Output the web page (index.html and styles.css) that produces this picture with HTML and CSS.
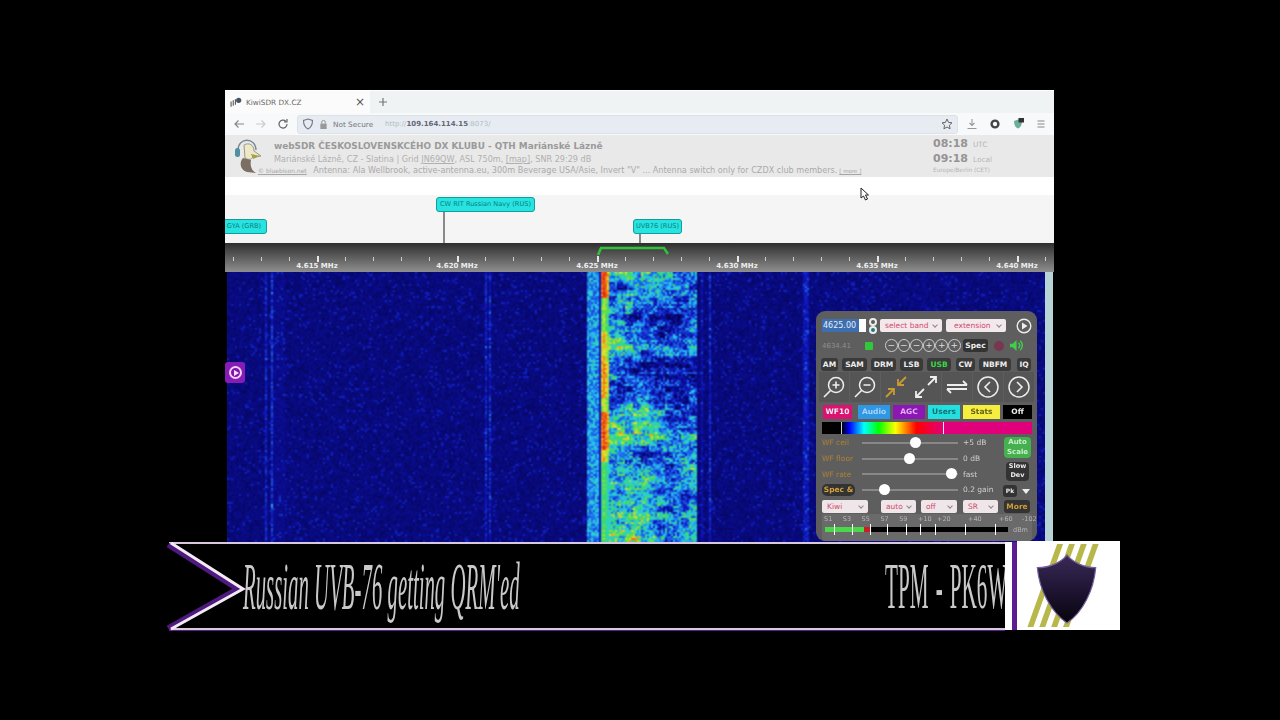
FILE: index.html
```html
<!DOCTYPE html>
<html lang="en">
<head>
<meta charset="utf-8">
<title>Russian UVB-76 getting QRM'ed</title>
<link rel="stylesheet" href="styles.css">
</head>
<body>
<main class="stage">
  <section class="window">
    <div class="tabbar">
      <div class="tab">
        <svg class="favicon" viewBox="0 0 12 10"><path d="M1 9V4M3 8V3M5 7V2" stroke="#555" fill="none"/><circle cx="8" cy="3" r="2.4" fill="#456"/></svg>
        <span class="tab-title">KiwiSDR DX.CZ</span>
        <span class="tab-close">×</span>
      </div>
      <svg class="tab-new" viewBox="0 0 8 8"><path d="M4 0v8M0 4h8" stroke="#777" stroke-width="1.200"/></svg>
    </div>
    <div class="toolbar">
      <svg class="tool" viewBox="0 0 12 12"><path d="M11 6H2M5.500 2.500 2 6l3.500 3.500" fill="none" stroke="#888" stroke-width="1.200"/></svg>
      <svg class="tool" viewBox="0 0 12 12"><path d="M1 6h9M6.500 2.500 10 6 6.500 9.500" fill="none" stroke="#ccc" stroke-width="1.200"/></svg>
      <svg class="tool" viewBox="0 0 12 12"><path d="M10 6a4 4 0 1 1-1.200-2.800M10 1v3H7" fill="none" stroke="#666" stroke-width="1.200"/></svg>
      <div class="urlbar">
        <svg class="shield-small" viewBox="0 0 12 12"><path d="M6 1 10.500 2.500C10.500 7 9 9.500 6 11 3 9.500 1.500 7 1.500 2.500Z" fill="none" stroke="#778" stroke-width="1.100"/></svg>
        <svg class="lock" viewBox="0 0 10 12"><path d="M3 5V3.500a2 2 0 0 1 4 0V5" fill="none" stroke="#888"/><rect x="1.500" y="5" width="7" height="6" fill="#999"/></svg>
        <span class="not-secure">Not Secure</span>
        <span class="url"><span class="dim">http://</span><b>109.164.114.15</b><span class="dim">:8073/</span></span>
        <svg class="star" viewBox="0 0 12 12"><path d="M6 1 7.500 4.400 11 4.800 8.400 7.200 9.100 10.800 6 9 2.900 10.800 3.600 7.200 1 4.800 4.500 4.400Z" fill="none" stroke="#666"/></svg>
      </div>
      <div class="tool-right">
        <svg class="tool" viewBox="0 0 12 12"><path d="M6 1v6M3.500 5 6 7.500 8.500 5M1.500 10.500h9" fill="none" stroke="#999" stroke-width="1.100"/></svg>
        <svg class="tool" viewBox="0 0 12 12"><circle cx="6" cy="6" r="3.400" fill="none" stroke="#444" stroke-width="2.400"/></svg>
        <svg class="tool" viewBox="0 0 12 12"><path d="M6 1.500 10 3C10 7 8.500 9.500 6 10.500 3.500 9.500 2 7 2 3Z" fill="#6ab09a"/><rect x="6.500" y="0" width="5.500" height="4.500" fill="#333"/></svg>
        <svg class="tool" viewBox="0 0 12 12"><path d="M2.500 3h7M2.500 6h7M2.500 9h7" stroke="#888" stroke-width="1.100"/></svg>
      </div>
    </div>
    <header class="site">
      <svg class="logo" viewBox="0 0 30 38">
        <path d="M5 14C5 1 23 1 23 14" fill="none" stroke="#789" stroke-width="1.300"/>
        <rect x="2" y="12" width="5" height="9" rx="2.500" fill="#4f8fa0"/>
        <path d="M11 9c5-3 10 0 10 6l7 5-8 1c-2 3-5 3-8 1Z" fill="#eee8c8" stroke="#998"/>
        <path d="M18 18l9 2-7 3Z" fill="#a5a04a"/>
        <path d="M10 22c-4 4-3 12 4 14l9 1c-5-3-6-8-5-13Z" fill="#7b6e62"/>
      </svg>
      <div class="site-text">
        <div class="site-title">webSDR ČESKOSLOVENSKCÉHO DX KLUBU - QTH Mariánské Lázně</div>
        <div class="site-sub">Mariánské Lázně, CZ - Slatina | Grid <u>JN69QW</u>, ASL 750m, <u>[map]</u>, SNR 29:29 dB</div>
        <div class="site-note"><u class="credit">© bluebison.net</u> Antenna: Ala Wellbrook, active-antenna.eu, 300m Beverage USA/Asie, Invert "V" ... Antenna switch only for CZDX club members.<span class="more-link">[ more ]</span></div>
      </div>
      <div class="clock">
        <div class="clock-row"><b>08:18</b><span>UTC</span></div>
        <div class="clock-row"><b>09:18</b><span>Local</span></div>
        <div class="clock-zone">Europe/Berlin (CET)</div>
      </div>
    </header>
    <div class="gap">
      <svg class="cursor" viewBox="0 0 10 14"><path d="M1 1v10l2.500-2 2 4 2-1-2-4H8.500Z" fill="#fff" stroke="#222"/></svg>
    </div>
    <div class="stations">
      <span class="station st-gya">GYA (GRB)</span>
      <span class="station st-cw">CW RIT Russian Navy (RUS)</span>
      <span class="stem stem-cw"></span>
      <span class="station st-uvb">UVB76 (RUS)</span>
      <span class="stem stem-uvb"></span>
    </div>
    <div class="scale">
      <svg class="passband" viewBox="0 0 72 10"><path d="M1 10 4 3h63l4 6" fill="none" stroke="#2fc23a" stroke-width="2.600"/></svg>
      <div class="ticks"></div>
      <div class="freqs">
        <span>4.615 MHz</span><span>4.620 MHz</span><span>4.625 MHz</span><span>4.630 MHz</span><span>4.635 MHz</span><span>4.640 MHz</span>
      </div>
    </div>
    <div class="fall">
      <canvas id="wf" width="818" height="270"></canvas>
      <div class="edge"></div>
      <div class="side-play"><span></span></div>
      <aside class="panel">
        <div class="row r1">
          <div class="freq-input"><span>4625.00</span></div>
          <div class="dots"><i class="dot-o"></i><i class="dot-t"></i></div>
          <div class="sel band">select band</div>
          <div class="sel ext">extension</div>
          <svg class="play" viewBox="0 0 16 16"><circle cx="8" cy="8" r="6.800" fill="none" stroke="#eee" stroke-width="1.400"/><path d="M6 4.500 11.500 8 6 11.500Z" fill="#eee"/></svg>
        </div>
        <div class="row r2">
          <span class="readout">4634.41</span>
          <span class="check"></span>
          <div class="steps"><i>−</i><i>−</i><i>−</i><i>+</i><i>+</i><i>+</i></div>
          <span class="spec">Spec</span>
          <span class="mute"></span>
          <svg class="speaker" viewBox="0 0 16 14"><path d="M1 5h3l4-4v12L4 9H1Z" fill="#3fd04a"/><path d="M10 4c2 2 2 4 0 6M12 2c3 3 3 7 0 10" fill="none" stroke="#3fd04a" stroke-width="1.500"/></svg>
        </div>
        <div class="row modes">
          <span>AM</span><span>SAM</span><span>DRM</span><span>LSB</span><span class="on">USB</span><span>CW</span><span>NBFM</span><span>IQ</span>
        </div>
        <div class="row zooms">
          <svg viewBox="0 0 24 24"><circle cx="14" cy="10" r="7.500" fill="none" stroke="#eee" stroke-width="1.500"/><path d="M8.500 15.500 2 22M10.500 10h7M14 6.500v7" stroke="#eee" stroke-width="1.600" fill="none"/></svg>
          <svg viewBox="0 0 24 24"><circle cx="14" cy="10" r="7.500" fill="none" stroke="#eee" stroke-width="1.500"/><path d="M8.500 15.500 2 22M10.500 10h7" stroke="#eee" stroke-width="1.600" fill="none"/></svg>
          <svg viewBox="0 0 24 24"><path d="M22 2 14 10M14 4v6h6M2 22l8-8M4 14h6v6" fill="none" stroke="#c99a2e" stroke-width="1.800"/></svg>
          <svg viewBox="0 0 24 24"><path d="M14 10 22 2M16 2h6v6M10 14l-8 8M2 16v6h6" fill="none" stroke="#eee" stroke-width="1.800"/></svg>
          <svg viewBox="0 0 24 24"><path d="M2 10h20M18 6l4 4M22 14H2M6 18l-4-4" fill="none" stroke="#eee" stroke-width="1.800"/></svg>
          <svg viewBox="0 0 24 24"><circle cx="12" cy="12" r="10" fill="none" stroke="#eee" stroke-width="1.500"/><path d="M14 7l-5 5 5 5" fill="none" stroke="#eee" stroke-width="1.600"/></svg>
          <svg viewBox="0 0 24 24"><circle cx="12" cy="12" r="10" fill="none" stroke="#eee" stroke-width="1.500"/><path d="M10 7l5 5-5 5" fill="none" stroke="#eee" stroke-width="1.600"/></svg>
        </div>
        <div class="row tabs">
          <span class="t-wf">WF10</span><span class="t-audio">Audio</span><span class="t-agc">AGC</span><span class="t-users">Users</span><span class="t-stats">Stats</span><span class="t-off">Off</span>
        </div>
        <div class="colormap"></div>
        <div class="controls">
          <div class="sliders">
            <div class="slide"><label>WF ceil</label><div class="track"><i class="th-ceil"></i></div><span>+5 dB</span></div>
            <div class="slide"><label>WF floor</label><div class="track"><i class="th-floor"></i></div><span>0 dB</span></div>
            <div class="slide"><label>WF rate</label><div class="track"><i class="th-rate"></i></div><span>fast</span></div>
            <div class="slide"><label class="spec-a">Spec &amp;</label><div class="track"><i class="th-gain"></i></div><span>0.2 gain</span></div>
          </div>
          <div class="side">
            <span class="auto">Auto<br>Scale</span>
            <span class="slow">Slow<br>Dev</span>
            <div class="pk"><span>Pk</span><i></i></div>
          </div>
        </div>
        <div class="row drops">
          <div class="sel d-kiwi">Kiwi</div>
          <div class="sel d-auto">auto</div>
          <div class="sel d-off">off</div>
          <div class="sel d-sr">SR</div>
          <span class="more">More</span>
        </div>
        <div class="meter">
          <div class="meter-labels"><span>S1</span><span>S3</span><span>S5</span><span>S7</span><span>S9</span><span>+10</span><span>+20</span><span>+40</span><span>+60</span><span class="dbm">-102</span></div>
          <div class="meter-row"><div class="bar"><i class="lvl"></i><i class="peak"></i></div><span class="dbm">dBm</span></div>
        </div>
      </aside>
    </div>
  </section>
  <section class="lower">
    <div class="lower-bar">
      <span class="caption">Russian UVB-76 getting QRM'ed</span>
      <span class="callsign">TPM - PK6WE</span>
    </div>
    <svg class="chevron" viewBox="0 0 85 90"><rect x="0" y="0" width="4" height="90" fill="#000"/><path d="M3 3 72 47 3 86" fill="none" stroke="#4f1a80" stroke-width="5"/><path d="M6 1 78 47 6 87" fill="none" stroke="#f3eaf6" stroke-width="3"/></svg>
    <div class="strip-white"></div>
    <div class="strip-purple"></div>
    <div class="badge">
      <svg viewBox="0 0 103 90">
        <defs>
          <linearGradient id="shieldFill" x1="0" y1="0" x2="0" y2="1">
            <stop offset="0" stop-color="#3a2a58"/>
            <stop offset=".55" stop-color="#1d1330"/>
            <stop offset="1" stop-color="#07050c"/>
          </linearGradient>
        </defs>
        <path d="M40 3h6L16 87h-6ZM52 3h6L28 87h-6ZM64 3h6L40 87h-6ZM76 3h6L52 87h-6Z" fill="#b8b84a"/>
        <path d="M50 14C45 21 33 27 20 27 22 50 34 72 50 83 66 72 77 50 79 27 67 27 55 21 50 14Z" fill="url(#shieldFill)" stroke="#75619a" stroke-width="1.200"/>
      </svg>
    </div>
  </section>
</main>
<script src="waterfall.js"></script>
</body>
</html>
```
FILE: styles.css
```css
* { box-sizing: border-box; }
html, body { margin: 0; background: #000; }
body { font-family: "DejaVu Sans", "Liberation Sans", sans-serif; }
.stage { width: 1280px; height: 720px; padding-top: 90px; background: #000; overflow: hidden; display: flex; flex-direction: column; }

.window { width: 829px; height: 452px; margin-left: 225px; display: flex; flex-direction: column; background: #fff; filter: blur(.7px); flex: none; }

.tabbar { height: 23px; display: flex; align-items: center; background: #f0f3f4; border-top: 1px solid #fff; }
.tab { width: 145px; height: 22px; background: #fbfbfb; display: flex; align-items: center; padding: 0 5px; gap: 3px; }
.favicon { width: 13px; height: 11px; }
.tab-title { font: 7.300px "DejaVu Sans", sans-serif; color: #666; flex: 1; }
.tab-close { font-size: 12px; color: #555; line-height: 1; }
.tab-new { width: 8px; height: 8px; margin-left: 9px; }

.toolbar { height: 22px; background: #f8f9fa; display: flex; align-items: center; padding-left: 8px; }
.tool { width: 12px; height: 12px; flex: none; margin-right: 10px; }
.urlbar { width: 661px; height: 19px; flex: none; margin-left: -2px; background: #e6ecf2; border-radius: 3px; border: 1px solid #dde2e8; display: flex; align-items: center; padding: 0 4px; }
.shield-small { width: 12px; height: 12px; flex: none; }
.lock { width: 9px; height: 11px; margin-left: 5px; flex: none; }
.not-secure { font: 7.300px "DejaVu Sans", sans-serif; color: #777; margin-left: 5px; width: 52px; flex: none; }
.url { font: 7px "DejaVu Sans", sans-serif; color: #667; flex: 1; }
.url .dim { color: #b5bcc3; }
.star { width: 12px; height: 12px; flex: none; }
.tool-right { display: flex; margin-left: 8px; }
.tool-right .tool { margin-right: 11px; }

.site { height: 42px; background: #e9e9e9; display: flex; position: relative; padding-left: 8px; }
.logo { width: 30px; height: 38px; flex: none; margin-top: 1px; }
.site-text { width: 659px; margin-left: 11px; padding-top: 5px; color: #b0b0b0; flex: none; }
.site-title { font: bold 8.900px/13px "DejaVu Sans", sans-serif; color: #9a9a9a; white-space: nowrap; }
.site-sub { font: 8.100px/12px "DejaVu Sans", sans-serif; white-space: nowrap; }
.site-note { font: 8.100px/11px "DejaVu Sans", sans-serif; white-space: nowrap; margin-left: -16px; color: #aaa; }
.credit { font-size: 6px; color: #a5a5a5; margin-right: 4px; }
.more-link { font-size: 5.500px; color: #a5a5a5; text-decoration: underline; margin-left: 2px; }
.clock { padding-top: 1px; color: #b5b5b5; }
.clock-row { display: flex; align-items: baseline; gap: 5px; height: 15px; }
.clock-row b { font: bold 11px/15px "DejaVu Sans", sans-serif; color: #949494; }
.clock-row span { font: 7.300px "DejaVu Sans", sans-serif; }
.clock-zone { font: 5.800px/9px "DejaVu Sans", sans-serif; }

.gap { height: 18px; background: #fff; position: relative; z-index: 1; }
.cursor { position: absolute; left: 635px; top: 10px; width: 10px; height: 14px; }

.stations { height: 48px; background: #f5f5f5; position: relative; overflow: hidden; }
.station { position: absolute; height: 15px; background: #27e4e0; border: 1px solid #149c9c; border-radius: 3px; font: 6.600px/13px "DejaVu Sans", sans-serif; color: #0c7f80; white-space: nowrap; text-align: center; }
.st-gya { left: -4px; top: 24px; width: 46px; }
.st-cw { left: 211px; top: 2px; width: 99px; }
.st-uvb { left: 408px; top: 24px; width: 49px; }
.stem { position: absolute; width: 2px; background: #8a8a8a; }
.stem-cw { left: 218px; top: 17px; height: 31px; }
.stem-uvb { left: 414px; top: 39px; height: 9px; }

.scale { height: 29px; background: linear-gradient(#2e2e2e 0, #555 40%, #8e8e8e 100%); position: relative; overflow: hidden; }
.passband { position: absolute; left: 372px; top: 2px; width: 72px; height: 10px; }
.ticks { height: 19px; background-image: repeating-linear-gradient(90deg, #e8e8e8 0 2px, transparent 2px 140px), repeating-linear-gradient(90deg, #ccc 0 1px, transparent 1px 28px); background-size: 100% 7px, 100% 4px; background-position: 92px 13px, 8px 14px; background-repeat: repeat-x; }
.freqs { display: flex; padding-left: 22px; height: 10px; }
.freqs span { width: 140px; flex: none; text-align: center; font: bold 7px/9px "DejaVu Sans", sans-serif; color: #eee; }

.fall { height: 270px; background: #000; display: flex; padding-left: 2px; position: relative; }
#wf { display: block; width: 818px; height: 270px; flex: none; }
.edge { width: 8px; background: #b8d3d6; }

.side-play { position: absolute; left: 0; top: 90px; width: 20px; height: 21px; background: #861cb4; border-radius: 3px; display: flex; align-items: center; justify-content: center; }
.side-play span { width: 13px; height: 13px; border-radius: 50%; border: 2px solid #f2d0ff; background: #7f14a8; position: relative; }
.side-play span::after { content: ""; position: absolute; left: 3px; top: 1.500px; border-left: 5px solid #f5e0ff; border-top: 3px solid transparent; border-bottom: 3px solid transparent; }

.panel { position: absolute; left: 591px; top: 39px; width: 221px; height: 230px; background: #5e5e5e; border-radius: 9px; padding: 8px 5px 0 6px; color: #eee; }
.row { display: flex; align-items: center; }

.r1 { height: 13px; }
.freq-input { width: 44px; height: 13px; background: #fff; flex: none; }
.freq-input span { display: block; background: #3d6fb0; color: #e6eef8; font: 8px/13px "DejaVu Sans", sans-serif; padding-left: 1px; width: 37px; overflow: hidden; }
.dots { width: 14px; height: 16px; display: flex; flex-direction: column; align-items: center; flex: none; }
.dots i { width: 8px; height: 8px; border-radius: 50%; border: 2px solid; flex: none; }
.dot-o { border-color: #c98a2a; }
.dot-t { border-color: #2cc5c5; background: #1a7f80; }
.sel { position: relative; background: #f3e9ec; color: #d24a6c; font: 7.500px/13px "DejaVu Sans", sans-serif; height: 13px; padding-left: 5px; border-radius: 2px; white-space: nowrap; flex: none; }
.sel::after { content: ""; position: absolute; right: 5px; top: 3.500px; width: 3px; height: 3px; border-right: 1px solid #888; border-bottom: 1px solid #888; transform: rotate(45deg); }
.band { width: 62px; }
.ext { width: 60px; margin-left: 4px; padding-left: 8px; }
.play { width: 16px; height: 16px; margin-left: 10px; flex: none; }

.r2 { height: 13px; margin-top: 7px; }
.readout { font: 7px "DejaVu Sans", sans-serif; color: #8f8f8f; width: 43px; white-space: nowrap; flex: none; }
.check { width: 8px; height: 8px; background: #30c83a; border-radius: 1px; flex: none; }
.steps { display: flex; margin-left: 12px; width: 76px; flex: none; }
.steps i { width: 12.600px; height: 12.600px; border: 1px solid #ccc; border-radius: 50%; font: normal 9px/10px "DejaVu Sans", sans-serif; text-align: center; color: #ddd; }
.spec { width: 25px; height: 13px; background: #333; border-radius: 3px; margin-left: 2px; font: bold 7.500px/13px "DejaVu Sans", sans-serif; text-align: center; flex: none; }
.mute { width: 10px; height: 10px; margin-left: 6px; border-radius: 50%; background: #7a3550; flex: none; }
.speaker { width: 15px; height: 13px; margin-left: 5px; flex: none; }

.modes { height: 13px; margin-top: 6px; justify-content: flex-start; gap: 4px; }
.modes span { background: #3a3a3a; border-radius: 3px; height: 13px; font: bold 7.500px/13px "DejaVu Sans", sans-serif; text-align: center; width: 23px; flex: none; }
.modes span:nth-child(1) { width: 17px; margin-left: -1px; }
.modes span:nth-child(2) { width: 25px; }
.modes span:nth-child(3) { width: 25px; }
.modes span:nth-child(5) { width: 24px; }
.modes span:nth-child(6) { width: 19px; margin-left: 1px; }
.modes span:nth-child(7) { width: 32px; }
.modes span:nth-child(8) { width: 14px; margin-left: 2px; }
.modes .on { color: #38d848; }

.zooms { height: 30px; margin-top: 1px; gap: 6.800px; }
.zooms svg { width: 24px; height: 24px; flex: none; background: #555; box-shadow: 0 0 0 3px #555; }

.tabs { height: 14px; margin-top: 3px; gap: 3px; }
.tabs span { height: 14px; font: bold 7.500px/14px "DejaVu Sans", sans-serif; text-align: center; flex: none; width: 32px; }
.tabs .t-wf { background: #da1272; width: 29px; margin-left: 1px; }
.tabs .t-audio { background: #2f98e4; color: #a8d4f4; margin-left: 3px; }
.tabs .t-agc { background: #8c17b5; color: #e3b4f5; }
.tabs .t-users { background: #22e0e0; color: #107070; }
.tabs .t-stats { background: #f5ee3e; color: #666020; width: 37px; }
.tabs .t-off { background: #000; width: 29px; }

.colormap { height: 12px; margin-top: 3px; background: linear-gradient(#ccc, #ccc) 9% 0 / 1px 100% no-repeat, linear-gradient(#eee, #eee) 58% 0 / 1px 100% no-repeat, linear-gradient(90deg, #000 0, #000 9.500%, #00f 13%, #0ff 20%, #0f0 27%, #ff0 35%, #f00 45%, #e0007c 58%, #e0007c 100%); }

.controls { display: flex; height: 63px; margin-top: 1px; }
.sliders { width: 181px; flex: none; }
.slide { display: flex; align-items: center; height: 15.700px; font: 7.500px "DejaVu Sans", sans-serif; }
.slide label { width: 40px; flex: none; color: #b1812e; white-space: nowrap; }
.slide span { margin-left: 5px; color: #cfcfcf; white-space: nowrap; }
.slide .spec-a { background: #333; border-radius: 5px; height: 12px; line-height: 12px; width: 33px; margin-right: 7px; font-weight: bold; text-align: center; color: #d8a23a; }
.track { width: 96px; height: 2px; background: #888; position: relative; flex: none; }
.track i { position: absolute; top: -5px; width: 11px; height: 11px; margin-left: -5.500px; border-radius: 50%; background: #fff; }
.th-ceil { left: 56%; }
.th-floor { left: 49%; }
.th-rate { left: 93%; }
.th-gain { left: 23%; }
.side { width: 29px; display: flex; flex-direction: column; align-items: center; padding-top: 2px; }
.auto { width: 27px; height: 21px; background: #46b050; border-radius: 4px; color: #c9f0cc; font: bold 7px/10px "DejaVu Sans", sans-serif; text-align: center; }
.slow { width: 23px; height: 19px; margin-top: 4px; background: #333; border-radius: 4px; font: bold 6.500px/9px "DejaVu Sans", sans-serif; text-align: center; }
.pk { width: 29px; display: flex; align-items: center; justify-content: space-between; margin-top: 4px; }
.pk span { background: #333; border-radius: 3px; font: bold 6px/12px "DejaVu Sans", sans-serif; width: 14px; height: 12px; text-align: center; }
.pk i { border-top: 5px solid #eee; border-left: 4px solid transparent; border-right: 4px solid transparent; margin-right: 2px; }

.drops { height: 13px; margin-top: 2px; }
.drops .sel { background: #efe6e9; }
.d-kiwi { width: 46px; }
.d-auto { width: 35px; margin-left: 13px; }
.d-off { width: 36px; margin-left: 5px; }
.d-sr { width: 35px; margin-left: 6px; }
.more { width: 26px; height: 13px; margin-left: 6px; background: #333; border-radius: 3px; color: #cf9d38; font: bold 7.500px/13px "DejaVu Sans", sans-serif; text-align: center; flex: none; }

.meter { height: 27px; margin-top: 1px; background: #6a6a6a; border-radius: 3px; padding: 0 1px 0 2px; }
.meter-labels { display: flex; height: 10px; font: 6.500px/10px "DejaVu Sans", sans-serif; color: #b5b5b5; gap: 10px; white-space: nowrap; }
.meter-labels span { width: 9px; }
.meter-labels span:nth-child(8) { margin-left: 12px; }
.meter-labels span:nth-child(9) { margin-left: 12px; }
.meter-labels .dbm { margin-left: 4px; }
.meter-row { display: flex; align-items: center; height: 11px; }
.bar { width: 183px; height: 5px; background: #000; display: flex; margin-left: 1px; position: relative; flex: none; }
.bar::after { content: ""; position: absolute; left: 0; right: 0; top: -3px; height: 11px; background: linear-gradient(90deg, transparent 9px, #fff 9px 10px, transparent 10px 27px, #fff 27px 28px, transparent 28px 45px, #fff 45px 46px, transparent 46px 62px, #fff 62px 63px, transparent 63px 81px, #fff 81px 82px, transparent 82px 95px, #fff 95px 96px, transparent 96px 110px, #fff 110px 111px, transparent 111px 140px, #fff 140px 141px, transparent 141px 170px, #fff 170px 171px, transparent 171px); }
.lvl { width: 39px; background: #4ad84a; }
.peak { width: 6px; background: #c82020; }
.meter-row .dbm { margin-left: 5px; font: 6.500px "DejaVu Sans", sans-serif; color: #b5b5b5; }

.lower { height: 88px; margin-left: 165px; width: 955px; display: flex; position: relative; flex: none; filter: blur(.5px); }
.lower-bar { width: 840px; height: 88px; background: #000; border-top: 2px solid #d9c9de; border-bottom: 2px solid #d9c9de; box-shadow: 0 1px 0 #5a1f8a; overflow: hidden; display: flex; position: relative; flex: none; }
.caption { font: italic 68px/84px "Liberation Serif", serif; color: #c9c9c9; white-space: nowrap; width: 277px; margin-left: 78px; transform-origin: left center; transform: scaleX(.306); flex: none; }
.callsign { font: 66px/84px "Liberation Serif", serif; word-spacing: 6px; color: #c9c9c9; white-space: nowrap; width: 120px; margin-left: auto; transform-origin: left center; transform: scaleX(.32); flex: none; }
.chevron { position: absolute; left: 0; top: 0; width: 85px; height: 90px; }
.strip-white { width: 7px; background: #fff; flex: none; }
.strip-purple { width: 5px; background: #5c1c92; flex: none; }
.badge { width: 103px; height: 89px; background: #fff; margin-top: -1px; flex: none; }
.badge svg { display: block; width: 103px; height: 89px; }
```
FILE: waterfall.js
```js
(function () {
  var canvas = document.getElementById('wf');
  var ctx = canvas.getContext('2d');
  var W = canvas.width, H = canvas.height;
  var LW = Math.ceil(W / 2), LH = Math.ceil(H / 2);
  var seed = 76;
  function rnd() {
    seed = (seed + 0x6D2B79F5) | 0;
    var t = Math.imul(seed ^ (seed >>> 15), 1 | seed);
    t = (t + Math.imul(t ^ (t >>> 7), 61 | t)) ^ t;
    return ((t ^ (t >>> 14)) >>> 0) / 4294967296;
  }
  var stops = [
    [0, 5, 5, 85], [0.2, 14, 18, 185], [0.38, 30, 110, 240], [0.5, 40, 205, 235],
    [0.65, 60, 220, 90], [0.8, 230, 230, 40], [0.9, 240, 120, 20], [1, 225, 30, 20]
  ];
  function colour(v) {
    v = Math.max(0, Math.min(1, v));
    for (var i = 1; i < stops.length; i++) {
      if (v <= stops[i][0]) {
        var a = stops[i - 1], b = stops[i], f = (v - a[0]) / (b[0] - a[0]);
        return [a[1] + (b[1] - a[1]) * f, a[2] + (b[2] - a[2]) * f, a[3] + (b[3] - a[3]) * f];
      }
    }
    return stops[stops.length - 1].slice(1);
  }
  // Signal envelope, rows every 15px, columns across the USB passband.
  var map = [
    [7,7,7,6,6,5,5,5],[3,3,6,6,6,5,5,5],[6,6,6,5,4,4,4,4],[6,5,3,3,3,2,3,5],
    [7,6,5,4,3,3,4,5],[7,7,6,5,5,5,5,6],[5,4,3,2,2,3,3,3],[5,5,4,4,3,3,3,3],
    [3,3,4,4,3,3,4,4],[4,5,6,6,5,3,3,3],[6,7,7,7,6,3,4,4],[7,8,7,7,7,5,5,6],
    [6,5,5,3,3,4,5,5],[5,5,6,5,6,4,6,6],[6,6,6,6,5,4,5,7],[3,5,6,6,5,4,4,4],
    [7,7,7,7,6,5,6,6],[6,6,6,6,5,5,5,6],[8,8,8,7,6,5,7,8],[8,8,8,7,6,5,7,8]
  ];
  function env(x, y) {
    var cx = (x - 606) / 91 * 7, cy = y / 15;
    cx = Math.max(0, Math.min(6.999, cx));
    cy = Math.max(0, Math.min(18.999, cy));
    var ix = Math.floor(cx), iy = Math.floor(cy), fx = cx - ix, fy = cy - iy;
    return (map[iy][ix] * (1 - fx) + map[iy][ix + 1] * fx) * (1 - fy) +
           (map[iy + 1][ix] * (1 - fx) + map[iy + 1][ix + 1] * fx) * fy;
  }
  function carrier(y) {
    if (y < 25) return 0.98;
    if (y < 60) return 0.74;
    if (y < 90) return 0.85;
    if (y < 125) return 0.9;
    if (y < 140) return 0.8;
    if (y < 178) return 0.97;
    if (y < 190) return 0.85;
    return 0.68;
  }
  var lines = [
    [264, 266, 0.14], [270, 272, 0.18], [273, 285, 0.03], [484, 486, 0.14], [489, 491, 0.14],
    [700, 702, 0.09], [708, 710, 0.14], [803, 808, 0.12], [920, 926, 0.03]
  ];
  // Blotchy mid-scale noise for the signal, one value per 8x6 px cell.
  var cells = [];
  for (var c = 0; c < 20 * 50; c++) cells.push((rnd() - 0.5) * 0.26);
  var rowJit = [];
  for (var r = 0; r < LH; r++) rowJit.push((rnd() - 0.5) * 0.1);

  var small = document.createElement('canvas');
  small.width = LW; small.height = LH;
  var sctx = small.getContext('2d');
  var img = sctx.createImageData(LW, LH);
  for (var j = 0; j < LH; j++) {
    var y = j * 2;
    for (var i = 0; i < LW; i++) {
      var x = i * 2 + 227;
      var n = rnd();
      var v = 0.03 + n * 0.1 + (n > 0.94 ? 0.1 : 0);
      for (var k = 0; k < lines.length; k++) {
        if (x >= lines[k][0] && x < lines[k][1]) v += lines[k][2] * (0.6 + rnd() * 0.8);
      }
      if (x >= 587 && x < 598) v = 0.3 + rnd() * 0.26;
      if (x >= 598 && x < 600) v = 0.2;
      if (x >= 600 && x < 608) v = carrier(y) - Math.abs(x - 603) * 0.03 + (rnd() - 0.5) * 0.12;
      if (x >= 608 && x < 697) {
        var cell = cells[Math.floor((x - 608) / 8) + Math.floor(y / 6) * 20];
        v = env(x, y) / 9 * 0.9 - 0.11 + (rnd() - 0.5) * 0.34 + cell + rowJit[j];
      }
      var col = colour(v), p = (j * LW + i) * 4;
      img.data[p] = col[0]; img.data[p + 1] = col[1]; img.data[p + 2] = col[2]; img.data[p + 3] = 255;
    }
  }
  sctx.putImageData(img, 0, 0);
  ctx.imageSmoothingEnabled = true;
  ctx.drawImage(small, 0, 0, LW * 2, LH * 2);
})();
```
